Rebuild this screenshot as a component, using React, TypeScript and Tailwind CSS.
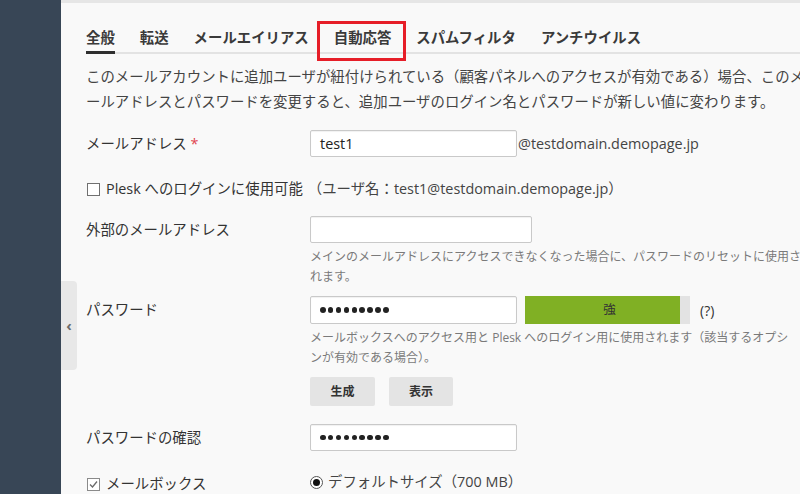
import React from "react";

const Dots = () => (
  <div className="flex items-center gap-[2.3px]">
    {Array.from({ length: 9 }).map((_, i) => (
      <div key={i} className="w-[5.6px] h-[5.6px] rounded-full bg-[#222]" />
    ))}
  </div>
);

const Input = ({ w, children }: { w: string; children?: React.ReactNode }) => (
  <div
    className={`${w} h-full bg-white border border-[#c9c9c9] rounded-[2px] shadow-[inset_0_1px_1px_rgba(0,0,0,0.06)] flex items-center px-[9px] text-[14.4px] text-[#222]`}
  >
    {children}
  </div>
);

export default function App() {
  const tabs = ["全般", "転送", "メールエイリアス", "自動応答", "スパムフィルタ", "アンチウイルス"];
  return (
    <div
      className="w-[800px] h-[494px] overflow-hidden flex bg-[#f9f9f9] text-[#333]"
      style={{ fontFamily: '"Open Sans", "Noto Sans CJK JP", sans-serif' }}
    >
      <div className="w-[61px] shrink-0 bg-[#384656]" />
      <div className="relative flex-1 flex flex-col min-w-0">
        <div className="h-[3px] bg-[#e6e6e6] shrink-0" />

        {/* sidebar toggle */}
        <div className="absolute left-0 top-[281px] w-[16px] h-[89px] bg-[#e8e8e8] rounded-r-[4px] flex items-center justify-center text-[#6b6b6b] text-[15px] font-bold leading-none">
          ‹
        </div>

        <div className="ml-[25px] flex flex-col">
          {/* tabs */}
          <div className="flex gap-[25px] pt-[25px] border-b-2 border-[#e3e3e3]">
            {tabs.map((t, i) => (
              <div key={t} className="relative pb-[4px] text-[14.4px] leading-[20px] font-bold text-[#3a3a3a] whitespace-nowrap">
                {t}
                {i === 0 && <div className="absolute left-0 right-0 bottom-[-2px] h-[3px] bg-[#2f2f2f]" />}
                {i === 3 && (
                  <div className="absolute -left-[17px] -right-[15px] -top-[7px] -bottom-[9px] border-[3px] border-[#e61e28]" />
                )}
              </div>
            ))}
          </div>

          {/* description */}
          <div className="mt-[10px] text-[14.4px] leading-[25px] text-[#444] whitespace-nowrap">
            <div>このメールアカウントに追加ユーザが紐付けられている（顧客パネルへのアクセスが有効である）場合、このメ</div>
            <div>ールアドレスとパスワードを変更すると、追加ユーザのログイン名とパスワードが新しい値に変わります。</div>
          </div>

          {/* email */}
          <div className="mt-[16px] h-[27px] flex items-center text-[14.4px]">
            <div className="w-[224px] shrink-0 whitespace-nowrap">
              メールアドレス <span className="text-[#e0454f]">*</span>
            </div>
            <Input w="w-[207px]">test1</Input>
            <span className="ml-[1px] whitespace-nowrap text-[#444]">@testdomain.demopage.jp</span>
          </div>

          {/* plesk login */}
          <div className="mt-[22px] h-[20px] flex items-center text-[14.4px] whitespace-nowrap">
            <div className="w-[13px] h-[13px] ml-[1px] border border-[#707070] bg-white shrink-0" />
            <span className="ml-[6px]">Plesk へのログインに使用可能</span>
            <span className="ml-[5px] text-[#444]">（ユーザ名：test1@testdomain.demopage.jp）</span>
          </div>

          {/* external */}
          <div className="mt-[17px] h-[27px] flex items-center text-[14.4px]">
            <div className="w-[224px] shrink-0 whitespace-nowrap">外部のメールアドレス</div>
            <Input w="w-[222px]" />
          </div>
          <div className="ml-[224px] mt-[4px] text-[12px] leading-[20px] text-[#7a7a7a] whitespace-nowrap">
            <div>メインのメールアドレスにアクセスできなくなった場合に、パスワードのリセットに使用さ</div>
            <div>れます。</div>
          </div>

          {/* password */}
          <div className="mt-[9px] h-[28px] flex items-center text-[14.4px]">
            <div className="w-[224px] shrink-0 whitespace-nowrap">パスワード</div>
            <Input w="w-[207px]">
              <Dots />
            </Input>
            <div className="ml-[8px] w-[165px] h-full flex bg-[#e3e3e3]">
              <div className="w-[155px] h-full bg-[#80b024] flex items-center justify-center text-[12.5px] text-[#333] pl-[14px]">
                強
              </div>
            </div>
            <span className="ml-[10px] text-[14px] text-[#333]">(?)</span>
          </div>
          <div className="ml-[224px] mt-[4px] text-[12px] leading-[20px] text-[#7a7a7a] whitespace-nowrap">
            <div>メールボックスへのアクセス用と Plesk へのログイン用に使用されます（該当するオプシ</div>
            <div>ンが有効である場合）。</div>
          </div>
          <div className="ml-[224px] mt-[9px] h-[29px] flex gap-[14px]">
            <div className="w-[65px] h-full bg-[#e4e4e4] rounded-[2px] flex items-center justify-center text-[12px] font-bold text-[#333]">
              生成
            </div>
            <div className="w-[64px] h-full bg-[#e4e4e4] rounded-[2px] flex items-center justify-center text-[12px] font-bold text-[#333]">
              表示
            </div>
          </div>

          {/* confirm */}
          <div className="mt-[18px] h-[27px] flex items-center text-[14.4px]">
            <div className="w-[224px] shrink-0 whitespace-nowrap">パスワードの確認</div>
            <Input w="w-[207px]">
              <Dots />
            </Input>
          </div>

          {/* mailbox */}
          <div className="mt-[21px] h-[20px] flex items-center text-[14.4px] whitespace-nowrap">
            <div className="w-[224px] shrink-0 flex items-center relative top-[2px]">
              <div className="w-[13px] h-[13px] ml-[1px] border border-[#8a8a8a] bg-white flex items-center justify-center">
                <svg width="11" height="11" viewBox="0 0 11 11">
                  <path d="M2 5.5 L4.5 8 L9 2.5" fill="none" stroke="#6a6a6a" strokeWidth="1.3" />
                </svg>
              </div>
              <span className="ml-[6px]">メールボックス</span>
            </div>
            <div className="w-[13px] h-[13px] rounded-full border border-[#555] bg-white flex items-center justify-center">
              <div className="w-[7px] h-[7px] rounded-full bg-[#111]" />
            </div>
            <span className="ml-[5px] text-[#444]">デフォルトサイズ（700 MB）</span>
          </div>
          <div className="ml-[319px] mt-[6px] h-[20px] flex gap-[5px]">
            <div className="w-[125px] h-full bg-white border border-[#d0d0d0] rounded-[2px]" />
            <div className="w-[60px] h-full bg-[#e8e8e8] border border-[#d8d8d8] rounded-[2px]" />
          </div>
        </div>
      </div>
    </div>
  );
}
